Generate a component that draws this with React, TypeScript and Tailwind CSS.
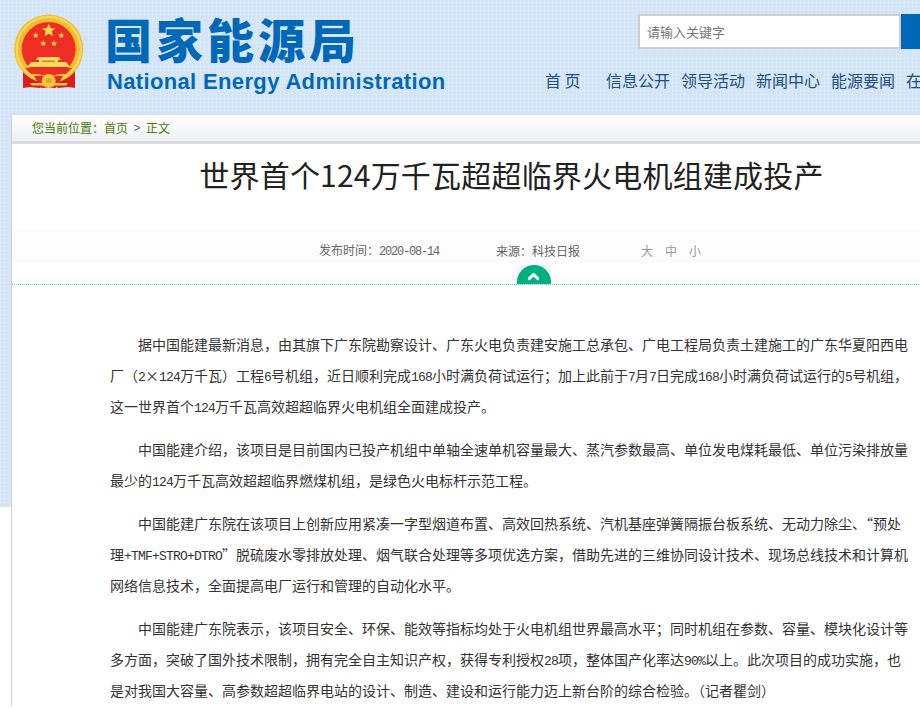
import React from "react";
import { ChevronUp } from "lucide-react";

const navItems = ["信息公开", "领导活动", "新闻中心", "能源要闻", "在线办事"];

const paragraphs = [
  "据中国能建最新消息，由其旗下广东院勘察设计、广东火电负责建安施工总承包、广电工程局负责土建施工的广东华夏阳西电厂（2×124万千瓦）工程6号机组，近日顺利完成168小时满负荷试运行；加上此前于7月7日完成168小时满负荷试运行的5号机组，这一世界首个124万千瓦高效超超临界火电机组全面建成投产。",
  "中国能建介绍，该项目是目前国内已投产机组中单轴全速单机容量最大、蒸汽参数最高、单位发电煤耗最低、单位污染排放量最少的124万千瓦高效超超临界燃煤机组，是绿色火电标杆示范工程。",
  "中国能建广东院在该项目上创新应用紧凑一字型烟道布置、高效回热系统、汽机基座弹簧隔振台板系统、无动力除尘、“预处理+TMF+STRO+DTRO”脱硫废水零排放处理、烟气联合处理等多项优选方案，借助先进的三维协同设计技术、现场总线技术和计算机网络信息技术，全面提高电厂运行和管理的自动化水平。",
  "中国能建广东院表示，该项目安全、环保、能效等指标均处于火电机组世界最高水平；同时机组在参数、容量、模块化设计等多方面，突破了国外技术限制，拥有完全自主知识产权，获得专利授权28项，整体国产化率达90%以上。此次项目的成功实施，也是对我国大容量、高参数超超临界电站的设计、制造、建设和运行能力迈上新台阶的综合检验。（记者瞿剑）",
];

// half-width runs sit at 7px per character like the original's fixed-width font
function Body({ text }: { text: string }) {
  const parts = text.split(/([0-9A-Za-z+%]+|×)/);
  return (
    <>
      {parts.map((part, i) => {
        if (part === "×") {
          return (
            <span key={i} className="inline-block w-[14px] indent-0 text-center leading-none">
              ×
            </span>
          );
        }
        if (/^[0-9A-Za-z+%]+$/.test(part)) {
          return (
            <span key={i} className="font-['Liberation_Mono',monospace] text-[13px] leading-none tracking-[-0.8px]">
              {part}
            </span>
          );
        }
        return <span key={i}>{part}</span>;
      })}
    </>
  );
}

function Emblem() {
  const star = "M0,-1 L0.29,-0.31 L0.95,-0.31 L0.47,0.12 L0.59,0.81 L0,0.45 L-0.59,0.81 L-0.47,0.12 L-0.95,-0.31 L-0.29,-0.31 Z";
  return (
    <svg width="72" height="78" viewBox="13 13 72 78" className="shrink-0">
      <path d="M23 68 L32 74 L44 84 L40 88 L30 87 L23 88 Z" fill="#d81e1e" />
      <path d="M75 68 L66 74 L54 84 L58 88 L68 87 L75 88 Z" fill="#d81e1e" />
      <circle cx="48.7" cy="49" r="34.5" fill="#f2bd2e" />
      <circle cx="48.7" cy="49" r="32" fill="none" stroke="#fbd860" strokeWidth="2" />
      <circle cx="48.7" cy="49" r="27" fill="#ee2d24" />
      <path d={star} transform="translate(48.7 30.5) scale(7)" fill="#fbd44a" />
      <path d={star} transform="translate(35.7 35.5) scale(3.2)" fill="#fbd44a" />
      <path d={star} transform="translate(61.3 35.5) scale(3.2)" fill="#fbd44a" />
      <path d={star} transform="translate(43.3 43.5) scale(3.2)" fill="#fbd44a" />
      <path d={star} transform="translate(54 43.5) scale(3.2)" fill="#fbd44a" />
      <path d="M38 57 L59 57 L61 60 L58 60 L58 62 L66 62 L70 67 L27 67 L31 62 L39 62 L39 60 L36 60 Z" fill="#fbd860" />
      <rect x="42" y="60.5" width="13" height="1.5" fill="#c9862a" />
      <path d="M25 68 L72 68 L66 74 L31 74 Z" fill="#ee2d24" />
      <path d="M34 76 L63 76 L56 88 L41 88 Z" fill="#e8262a" />
      <circle cx="48.7" cy="81" r="7" fill="#f6c93d" />
      <circle cx="48.7" cy="81" r="3" fill="#e9a824" />
      <path d="M30 83 L68 83 L66 85.5 L32 85.5 Z" fill="#f6c93d" />
    </svg>
  );
}

export default function App() {
  return (
    <div className="h-[708px] w-[920px] overflow-hidden bg-white bg-[repeating-linear-gradient(0deg,rgba(255,255,255,0.14)_0_1px,transparent_1px_4px),repeating-linear-gradient(90deg,rgba(255,255,255,0.14)_0_1px,transparent_1px_4px),linear-gradient(#d2e4f6,#d2e4f6)] bg-[length:100%_507px] bg-no-repeat font-['Noto_Sans_CJK_SC',sans-serif]">
      <div className="w-[1100px]">
        <header className="flex h-[114px]">
          <div className="ml-[13px] mt-[13px]">
            <Emblem />
          </div>
          <div className="ml-[22px] mt-[7px] w-[438px] text-[#0068b7]">
            <div className="ml-[-2px] text-[47px] font-black leading-[62px] tracking-[4px]">国家能源局</div>
            <div className="font-['Liberation_Sans',sans-serif] text-[22px] font-bold leading-[26px] tracking-[0.35px]">
              National Energy Administration
            </div>
          </div>
          <div className="pt-[14px]">
            <div className="ml-[93px] flex h-[35px] w-[340px]">
              <div className="flex w-[263px] items-center border-2 border-[#cfcfcf] bg-white pl-[7px] text-[13px] text-[#777]">
                请输入关键字
              </div>
              <div className="w-[60px] bg-[#0068b7]" />
            </div>
            <nav className="mt-[18px] flex h-[26px] items-center text-[16px] leading-[26px] text-[#1d4f7f]">
              <span className="mr-[25px] w-[36px] whitespace-pre">首 页</span>
              <div className="flex gap-[11px]">
                {navItems.map((item) => (
                  <a key={item} className="whitespace-nowrap">
                    {item}
                  </a>
                ))}
              </div>
            </nav>
          </div>
        </header>

        <main className="ml-[11px] w-[1000px] border-l border-[#d0d0d0] bg-white">
          <div className="flex h-[30px] items-center border-t border-b-[3px] border-t-[#dcdcdc] border-b-[#dcdcde] bg-gradient-to-b from-white to-[#eef0f3] pl-[20px] text-[12px] text-[#4a7a00]">
            <span>您当前位置：</span>
            <span>首页</span>
            <span className="w-[18px] text-center font-['Liberation_Sans',sans-serif] text-[#666]">&gt;</span>
            <span>正文</span>
          </div>

          <h1 className="pt-[8px] text-center text-[30px] font-normal leading-[44px] tracking-[0.2px] text-[#222]">
            世界首个124万千瓦超超临界火电机组建成投产
          </h1>

          <div className="mt-[34px] flex h-[33px] items-center bg-[#fcfcfc] pl-[307px] pt-[9px] text-[12px] text-[#666]">
            <span className="w-[177px]">
              发布时间：<span className="font-['Liberation_Mono',monospace] text-[12px] tracking-[-1.2px]">2020-08-14</span>
            </span>
            <span className="w-[145px]">来源：科技日报</span>
            <span className="flex gap-[12px] text-[#999]">
              <span>大</span>
              <span>中</span>
              <span>小</span>
            </span>
          </div>

          <div className="flex justify-center border-b border-dotted border-[#58d6b4] pl-[44px] pt-[2px]">
            <div className="bg-[#f5f5f5]">
              <div className="flex h-[19px] w-[34px] items-center justify-center rounded-t-[17px] bg-[#00b083] pt-[3px] text-white">
                <ChevronUp size={17} strokeWidth={4} />
              </div>
            </div>
          </div>

          <article className="ml-[98px] w-[800px] pt-[44px] text-[14px] leading-[31px] text-[#333]">
            {paragraphs.map((p, i) => (
              <p key={i} className="mb-3 indent-[28px]">
                <Body text={p} />
              </p>
            ))}
          </article>
        </main>
      </div>
    </div>
  );
}
